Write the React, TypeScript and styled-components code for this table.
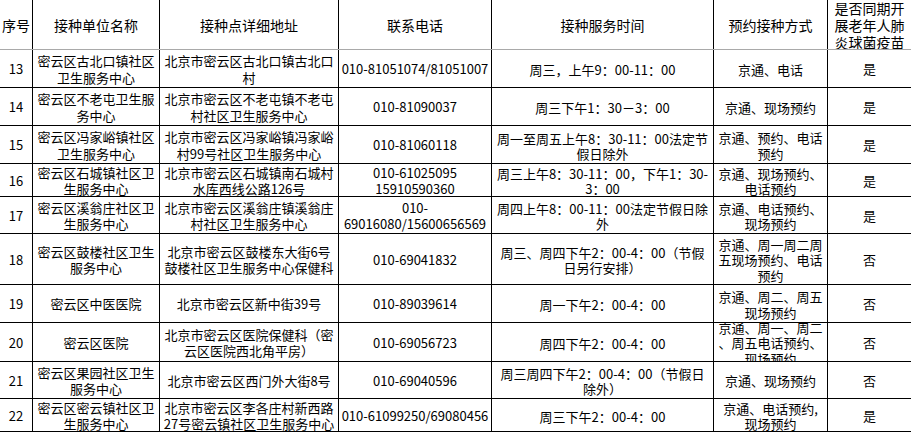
import React from "react";
import styled, { createGlobalStyle } from "styled-components";

const Global = createGlobalStyle`
  html, body {
    margin: 0;
    padding: 0;
    background: #ffffff;
  }
  body {
    font-family: "Noto Sans CJK SC", "Noto Sans", sans-serif;
    color: #000000;
  }
`;

const COLS = "33px 127px 179px 153px 222px 114px 83px";

const Sheet = styled.div`
  width: 911px;
  height: 432px;
  overflow: hidden;
  display: flex;
  flex-direction: column;
  background: #ffffff;
`;

const Row = styled.div<{ $h: number; $head?: boolean }>`
  flex: none;
  display: grid;
  grid-template-columns: ${COLS};
  height: ${(p) => p.$h}px;
  box-sizing: border-box;
  border-bottom: 1px solid ${(p) => (p.$head ? "#a9a9a9" : "#000000")};
`;

const Cell = styled.div<{ $lh: number; $size: number }>`
  box-sizing: border-box;
  min-width: 0;
  overflow: hidden;
  border-right: 1px solid #000000;
  display: flex;
  flex-direction: column;
  justify-content: center;
  align-items: center;
  padding-top: 2px;
  font-size: ${(p) => p.$size}px;
  line-height: ${(p) => p.$lh}px;
  white-space: nowrap;
  text-align: center;
  &:last-child {
    border-right: none;
  }
`;

const Line = styled.span`
  display: block;
  flex: none;
`;

type Cells = string[][];

const bodyLH = [16.5, 16.5, 16.5, 16.5, 15, 15.5, 16.5];

const header: Cells = [
  ["序号"],
  ["接种单位名称"],
  ["接种点详细地址"],
  ["联系电话"],
  ["接种服务时间"],
  ["预约接种方式"],
  ["是否同期开", "展老年人肺", "炎球菌疫苗"],
];

const rows: { h: number; cells: Cells }[] = [
  {
    h: 38,
    cells: [
      ["13"],
      ["密云区古北口镇社区", "卫生服务中心"],
      ["北京市密云区古北口镇古北口", "村"],
      ["010-81051074/81051007"],
      ["周三，上午9：00-11：00"],
      ["京通、电话"],
      ["是"],
    ],
  },
  {
    h: 38,
    cells: [
      ["14"],
      ["密云区不老屯卫生服", "务中心"],
      ["北京市密云区不老屯镇不老屯", "村社区卫生服务中心"],
      ["010-81090037"],
      ["周三下午1：30－3：00"],
      ["京通、现场预约"],
      ["是"],
    ],
  },
  {
    h: 38,
    cells: [
      ["15"],
      ["密云区冯家峪镇社区", "卫生服务中心"],
      ["北京市密云区冯家峪镇冯家峪", "村99号社区卫生服务中心"],
      ["010-81060118"],
      ["周一至周五上午8：30-11：00法定节", "假日除外"],
      ["京通、预约、电话", "预约"],
      ["是"],
    ],
  },
  {
    h: 33,
    cells: [
      ["16"],
      ["密云区石城镇社区卫", "生服务中心"],
      ["北京市密云区石城镇南石城村", "水库西线公路126号"],
      ["010-61025095", "15910590360"],
      ["周三上午8：30-11：00，下午1：30-", "3：00"],
      ["京通、现场预约、", "电话预约"],
      ["是"],
    ],
  },
  {
    h: 37,
    cells: [
      ["17"],
      ["密云区溪翁庄社区卫", "生服务中心"],
      ["北京市密云区溪翁庄镇溪翁庄", "村社区卫生服务中心"],
      ["010-", "69016080/15600656569"],
      ["周四上午8：00-11：00法定节假日除", "外"],
      ["京通、电话预约、", "现场预约"],
      ["是"],
    ],
  },
  {
    h: 51,
    cells: [
      ["18"],
      ["密云区鼓楼社区卫生", "服务中心"],
      ["北京市密云区鼓楼东大街6号", "鼓楼社区卫生服务中心保健科"],
      ["010-69041832"],
      ["周三、周四下午2：00-4：00（节假", "日另行安排）"],
      ["京通、周一周二周", "五现场预约、电话", "预约"],
      ["否"],
    ],
  },
  {
    h: 38,
    cells: [
      ["19"],
      ["密云区中医医院"],
      ["北京市密云区新中街39号"],
      ["010-89039614"],
      ["周一下午2：00-4：00"],
      ["京通、周二、周五", "现场预约"],
      ["否"],
    ],
  },
  {
    h: 39,
    cells: [
      ["20"],
      ["密云区医院"],
      ["北京市密云区医院保健科（密", "云区医院西北角平房）"],
      ["010-69056723"],
      ["周四下午2：00-4：00"],
      ["京通、周一、周二", "、周五电话预约、", "现场预约"],
      ["否"],
    ],
  },
  {
    h: 37,
    cells: [
      ["21"],
      ["密云区果园社区卫生", "服务中心"],
      ["北京市密云区西门外大街8号"],
      ["010-69040596"],
      ["周三周四下午2：00-4：00（节假日", "除外）"],
      ["京通、现场预约"],
      ["否"],
    ],
  },
  {
    h: 33,
    cells: [
      ["22"],
      ["密云区密云镇社区卫", "生服务中心"],
      ["北京市密云区李各庄村新西路", "27号密云镇社区卫生服务中心"],
      ["010-61099250/69080456"],
      ["周三下午2：00-4：00"],
      ["京通、电话预约,", "现场预约"],
      ["是"],
    ],
  },
];

const renderLines = (lines: string[]) =>
  lines.map((l, i) => <Line key={i}>{l}</Line>);

export default function App() {
  return (
    <>
      <Global />
      <Sheet>
        <Row $h={50} $head>
          {header.map((c, i) => (
            <Cell key={i} $size={14} $lh={17}>
              {renderLines(c)}
            </Cell>
          ))}
        </Row>
        {rows.map((r, ri) => (
          <Row key={ri} $h={r.h}>
            {r.cells.map((c, i) => (
              <Cell key={i} $size={13} $lh={bodyLH[i]}>
                {renderLines(c)}
              </Cell>
            ))}
          </Row>
        ))}
      </Sheet>
    </>
  );
}
